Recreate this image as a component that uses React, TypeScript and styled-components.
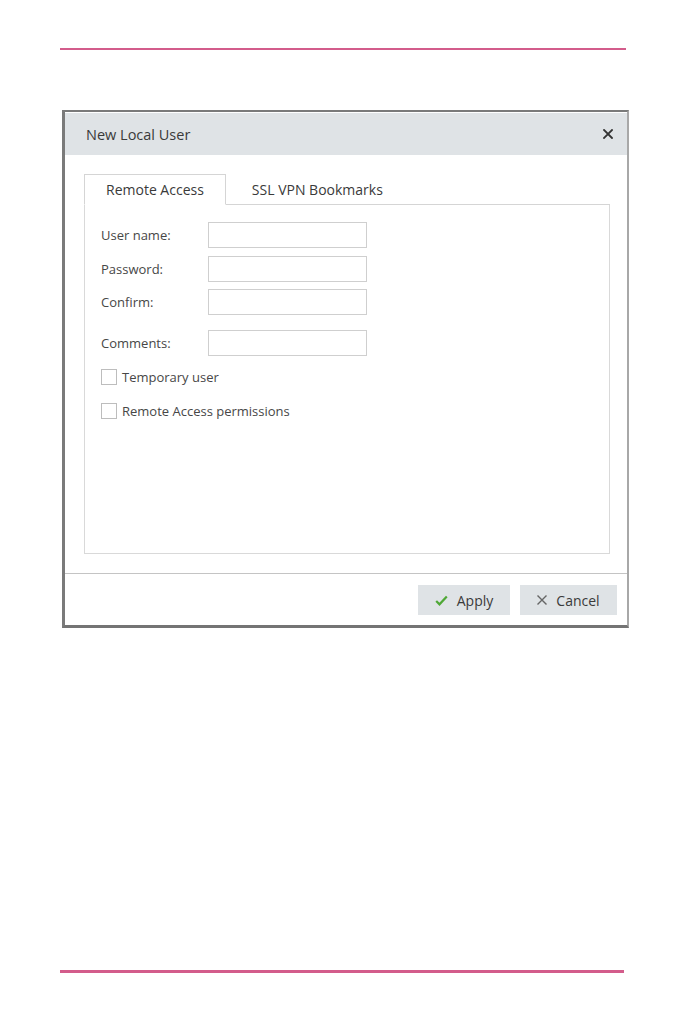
import React from "react";
import styled, { createGlobalStyle } from "styled-components";

const Global = createGlobalStyle`
  html, body { margin: 0; padding: 0; background: #ffffff; }
  body { font-family: "Open Sans", "Noto Sans", "Liberation Sans", sans-serif; color: #333; }
  * { box-sizing: border-box; }
`;

const Page = styled.div`
  width: 680px;
  height: 1021px;
  padding-top: 48px;
  display: flex;
  flex-direction: column;
`;

const Rule = styled.div<{ $thick: number; $left: number; $width: number; $top?: number }>`
  margin-left: ${(p) => p.$left}px;
  margin-top: ${(p) => p.$top ?? 0}px;
  width: ${(p) => p.$width}px;
  height: ${(p) => p.$thick}px;
  background: #d35c8b;
`;

const Dialog = styled.div`
  margin-top: 60px;
  margin-left: 62px;
  width: 567px;
  height: 518px;
  border-style: solid;
  border-width: 2px 2px 3px 3px;
  border-color: #7a7a7a #a8a8a8 #747474 #7a7a7a;
  background: #fff;
  display: flex;
  flex-direction: column;
`;

const Header = styled.div`
  height: 42px;
  margin-top: 1px;
  background: #dfe3e6;
  display: flex;
  align-items: center;
  justify-content: space-between;
  padding: 0 12px 0 21px;
`;

const Title = styled.div`
  font-size: 14.5px;
  color: #3a3a3a;
`;

const CloseBtn = styled.button`
  border: 0;
  background: transparent;
  padding: 0;
  width: 14px;
  height: 14px;
  display: flex;
  align-items: center;
  justify-content: center;
  cursor: pointer;
`;

const Body = styled.div`
  flex: 1;
  padding: 19px 17px 19px 19px;
  display: flex;
  flex-direction: column;
`;

const TabBar = styled.div`
  display: flex;
  height: 31px;
  border-bottom: 1px solid #d5d5d5;
`;

const Tab = styled.div<{ $active?: boolean }>`
  padding: 0 ${(p) => (p.$active ? "21px" : "25px")};
  display: flex;
  align-items: center;
  font-size: 14px;
  color: #3a3a3a;
  background: #fff;
  border: 1px solid ${(p) => (p.$active ? "#d5d5d5" : "transparent")};
  border-bottom: ${(p) => (p.$active ? "1px solid #fff" : "none")};
  margin-bottom: ${(p) => (p.$active ? "-1px" : "0")};
  height: ${(p) => (p.$active ? "31px" : "30px")};
`;

const Panel = styled.div`
  flex: 1;
  border: 1px solid #d9d9d9;
  border-top: none;
  padding: 17px 16px 0 16px;
  display: flex;
  flex-direction: column;
`;

const FieldRow = styled.div<{ $gap: number }>`
  display: flex;
  align-items: center;
  margin-top: ${(p) => p.$gap}px;
`;

const Label = styled.label`
  width: 107px;
  font-size: 13px;
  color: #474747;
`;

const Input = styled.input`
  width: 159px;
  height: 26px;
  border: 1px solid #cfcfcf;
  background: #fff;
  outline: none;
`;

const CheckRow = styled.label<{ $gap: number }>`
  display: flex;
  align-items: center;
  gap: 5px;
  margin-top: ${(p) => p.$gap}px;
  font-size: 13px;
  color: #474747;
`;

const Box = styled.span`
  width: 16px;
  height: 16px;
  border: 1px solid #bdbdbd;
  background: #fff;
  display: inline-block;
`;

const Footer = styled.div`
  height: 52px;
  border-top: 1px solid #c4c4c4;
  display: flex;
  justify-content: flex-end;
  align-items: flex-start;
  gap: 10px;
  padding: 11px 10px 0 0;
`;

const Button = styled.button<{ $w: number }>`
  width: ${(p) => p.$w}px;
  height: 30px;
  border: 0;
  background: #dfe3e6;
  font-family: "Open Sans", "Noto Sans", sans-serif;
  font-size: 14px;
  color: #3a3a3a;
  display: flex;
  align-items: center;
  justify-content: center;
  gap: 9px;
  padding: 0;
`;

const XIcon = ({ size, color, w }: { size: number; color: string; w: number }) => (
  <svg width={size} height={size} viewBox="0 0 10 10">
    <path d="M1 1L9 9M9 1L1 9" stroke={color} strokeWidth={w} strokeLinecap="square" fill="none" />
  </svg>
);

const CheckIcon = () => (
  <svg width="13" height="11" viewBox="0 0 13 11">
    <path d="M1.2 6l3.3 3.3L11.8 1.5" stroke="#4fa836" strokeWidth="2.2" fill="none" />
  </svg>
);

export default function App() {
  return (
    <>
      <Global />
      <Page>
        <Rule $thick={2} $left={60} $width={566} />
        <Dialog>
          <Header>
            <Title>New Local User</Title>
            <CloseBtn aria-label="Close">
              <XIcon size={10} color="#333" w={1.8} />
            </CloseBtn>
          </Header>
          <Body>
            <TabBar>
              <Tab $active>Remote Access</Tab>
              <Tab>SSL VPN Bookmarks</Tab>
            </TabBar>
            <Panel>
              <FieldRow $gap={0}>
                <Label>User name:</Label>
                <Input />
              </FieldRow>
              <FieldRow $gap={8}>
                <Label>Password:</Label>
                <Input type="password" />
              </FieldRow>
              <FieldRow $gap={7}>
                <Label>Confirm:</Label>
                <Input type="password" />
              </FieldRow>
              <FieldRow $gap={15}>
                <Label>Comments:</Label>
                <Input />
              </FieldRow>
              <CheckRow $gap={12}>
                <Box />
                Temporary user
              </CheckRow>
              <CheckRow $gap={16}>
                <Box />
                Remote Access permissions
              </CheckRow>
            </Panel>
          </Body>
          <Footer>
            <Button $w={92}>
              <CheckIcon />
              Apply
            </Button>
            <Button $w={97}>
              <XIcon size={10} color="#666" w={1.4} />
              Cancel
            </Button>
          </Footer>
        </Dialog>
        <Rule $thick={3} $left={60} $width={564} $top={342} />
      </Page>
    </>
  );
}
